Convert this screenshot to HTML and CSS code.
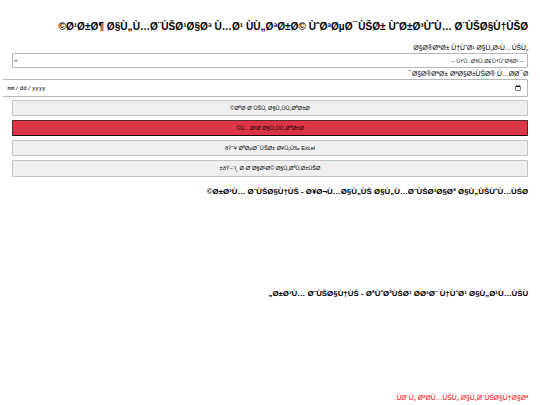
FILE: index.html
```html
<!DOCTYPE html>
<html lang="ar" dir="rtl">
<head>
<meta charset="utf-8">
<title>Sales</title>
<link rel="stylesheet" href="styles.css">
</head>
<body>
<h2 class="title">Ø¹Ø±Ø¶ Ø§Ù„Ù…Ø¨ÙŠØ¹Ø§Øª Ù…Ø¹ ÙÙ„ØªØ±Ø© ÙˆØªØµØ¯ÙŠØ± ÙˆØ±Ø³ÙˆÙ… Ø¨ÙŠØ§Ù†ÙŠØ©</h2>
<label class="lbl" for="type">Ø§Ø®ØªØ± Ù†ÙˆØ¹ Ø§Ù„Ø¹Ù…ÙŠÙ„</label>
<span class="select-wrap"><select class="field select" id="type"><option>-- ÙƒÙ„ Ø§Ù„Ø£Ù†ÙˆØ§Ø¹ --</option></select><svg class="caret" viewBox="0 0 8 5" width="4" height="3" aria-hidden="true"><path d="M1 1 L4 4 L7 1" fill="none" stroke="#222" stroke-width="1.6"/></svg></span>
<label class="lbl" for="date">Ø§Ø®ØªØ± ØªØ§Ø±ÙŠØ® Ù…Ø&shy;Ø¯Ø¯</label>
<input class="field date" type="date" id="date">
<button class="btn">ØªØ·Ø¨ÙŠÙ‚ Ø§Ù„ÙÙ„ØªØ±Ø©</button>
<button class="btn btn-danger">Ù…Ø³Ø&shy; Ø§Ù„ÙÙ„ØªØ±Ø©</button>
<button class="btn">ðŸ“¥ ØªØµØ¯ÙŠØ± Ø¥Ù„Ù‰ Excel</button>
<button class="btn">ðŸ–¨ï¸ Ø·Ø¨Ø§Ø¹Ø© Ø§Ù„ØªÙ‚Ø±ÙŠØ±</button>
<h3 class="sub">Ø±Ø³Ù… Ø¨ÙŠØ§Ù†ÙŠ - Ø¥Ø¬Ù…Ø§Ù„ÙŠ Ø§Ù„Ù…Ø¨ÙŠØ¹Ø§Øª Ø§Ù„ÙŠÙˆÙ…ÙŠØ©</h3>
<canvas class="chart chart-daily"></canvas>
<h3 class="sub">Ø±Ø³Ù… Ø¨ÙŠØ§Ù†ÙŠ - ØªÙˆØ²ÙŠØ¹ Ø&shy;Ø³Ø¨ Ù†ÙˆØ¹ Ø§Ù„Ø¹Ù…ÙŠÙ„</h3>
<canvas class="chart chart-type"></canvas>
<div class="error">ÙØ´Ù„ ØªØ&shy;Ù…ÙŠÙ„ Ø§Ù„Ø¨ÙŠØ§Ù†Ø§Øª</div>
</body>
</html>
```
FILE: styles.css
```css
html {
  background: #ffffff;
}

body {
  margin: 3.375px;
  padding: 9.4px 8.4375px 8.4375px;
  font-family: "Liberation Sans", Arial, sans-serif;
  font-size: 6.75px;
  color: #000000;
}

.title {
  font-size: 10.125px;
  font-weight: bold;
  margin: 8.4px 0 11.9px;
}

.sub {
  font-size: 7.9px;
  font-weight: bold;
  margin: 8.9px 0 7.9px;
}

.field {
  width: 100%;
  padding: 3.375px;
  margin: 2.1px 0;
  font-size: 5.625px;
  border: 1px solid #b8b8b8;
  border-radius: 1px;
  background: #ffffff;
}

.select-wrap {
  display: inline-block;
  position: relative;
  width: 100%;
  vertical-align: top;
}

.select {
  -webkit-appearance: none;
  appearance: none;
  display: block;
  height: 14.4px;
  color: #222222;
}

.caret {
  position: absolute;
  left: 2.5px;
  top: 8px;
}

.date {
  padding: 3.375px 4.22px;
  margin-bottom: 1.1px;
}

.btn {
  width: 100%;
  padding: 4.22px;
  margin: 1.8px 0;
  font-size: 5.625px;
  color: #000000;
  background: #efefef;
  border: 1px solid #c4c4c4;
  border-radius: 1px;
  vertical-align: top;
}

.btn-danger {
  background: #dc3545;
  border-color: #5a2a2e #5a2a2e #1e0a0b #5a2a2e;
}

.chart {
  display: block;
  width: 100%;
}

.chart-daily {
  height: 76px;
}

.chart-type {
  height: 88px;
}

.error {
  color: #ff0000;
}
```
